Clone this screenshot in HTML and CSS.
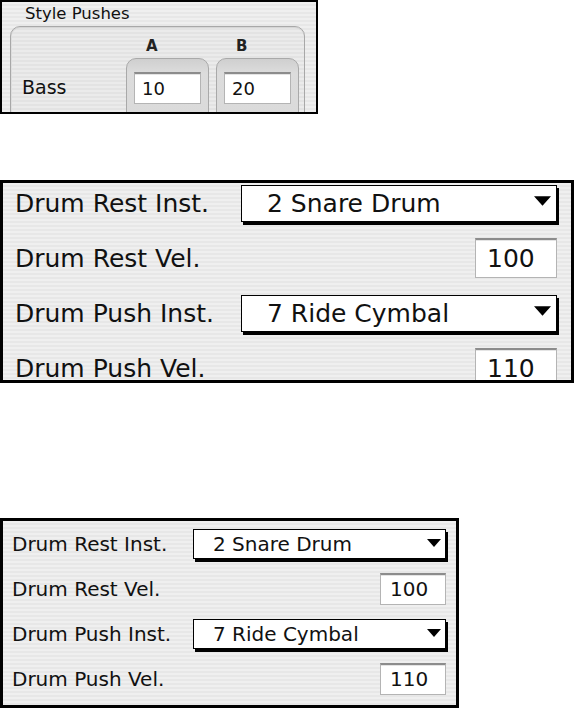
FILE: index.html
```html
<!DOCTYPE html>
<html>
<head>
<meta charset="utf-8">
<link rel="stylesheet" href="styles.css">
</head>
<body>
  <section class="panel pushes">
    <div class="title">Style Pushes</div>
    <div class="group">
      <div class="cell"></div>
      <div class="letter">A</div>
      <div class="letter">B</div>
      <div class="bass">Bass</div>
      <div class="col"><div class="field small">10</div></div>
      <div class="col"><div class="field small">20</div></div>
    </div>
  </section>

  <section class="panel drums big">
    <div class="label">Drum Rest Inst.</div>
    <div class="select"><span>2 Snare Drum</span><svg class="tri" viewBox="0 0 14 8"><polygon points="0,0 14,0 7,8"/></svg></div>
    <div class="label">Drum Rest Vel.</div>
    <div class="field num">100</div>
    <div class="label">Drum Push Inst.</div>
    <div class="select"><span>7 Ride Cymbal</span><svg class="tri" viewBox="0 0 14 8"><polygon points="0,0 14,0 7,8"/></svg></div>
    <div class="label">Drum Push Vel.</div>
    <div class="field num">110</div>
  </section>

  <section class="panel drums compact">
    <div class="label">Drum Rest Inst.</div>
    <div class="select"><span>2 Snare Drum</span><svg class="tri" viewBox="0 0 14 8"><polygon points="0,0 14,0 7,8"/></svg></div>
    <div class="label">Drum Rest Vel.</div>
    <div class="field num">100</div>
    <div class="label">Drum Push Inst.</div>
    <div class="select"><span>7 Ride Cymbal</span><svg class="tri" viewBox="0 0 14 8"><polygon points="0,0 14,0 7,8"/></svg></div>
    <div class="label">Drum Push Vel.</div>
    <div class="field num">110</div>
  </section>
</body>
</html>
```

FILE: styles.css
```css
html, body {
  margin: 0;
  padding: 0;
  background: #fff;
}
body {
  font-family: "DejaVu Sans", "Noto Sans", sans-serif;
  color: #111;
  width: 574px;
  height: 708px;
  overflow: hidden;
}
.panel {
  box-sizing: border-box;
  overflow: hidden;
  border: 3px solid #000;
  background: repeating-linear-gradient(#efefef 0 2px, #e7e7e7 2px 4px);
}

/* Panel 1 */
.pushes {
  width: 318px;
  height: 114px;
  border-width: 2px;
}
.pushes .title {
  font-size: 16.5px;
  line-height: 20px;
  padding: 2px 0 0 23px;
  height: 22px;
}
.group {
  margin-left: 8px;
  width: 295px;
  height: 120px;
  box-sizing: border-box;
  border: 1px solid #a8a8a8;
  border-radius: 10px;
  box-shadow: inset 0 1px 0 #d6d6d6, inset 1px 0 0 #dedede;
  background: rgba(0,0,0,0.015);
  display: grid;
  grid-template-columns: 97px 83px 83px;
  grid-template-rows: 18px auto;
  column-gap: 7px;
  row-gap: 3px;
  padding: 10px 0 0 11px;
}
.letter {
  font-weight: bold;
  font-size: 15px;
  line-height: 18px;
  padding-left: 20px;
  color: #222;
}
.bass {
  font-size: 19px;
  padding-top: 13px;
  line-height: 32px;
}
.col {
  height: 70px;
  box-sizing: border-box;
  border: 1px solid #a9a9a9;
  border-radius: 10px;
  background: linear-gradient(#cfcfcf, #dcdcdc 14px, #dadada);
  padding: 13px 0 0 7px;
}
.field {
  box-sizing: border-box;
  background: #fff;
  border: 1px solid #b4b4b4;
  border-top: 2px solid #8c8c8c;
  box-shadow: inset 0 1px 0 #e4e4e4;
  color: #111;
}
.field.small {
  width: 67px;
  height: 32px;
  font-size: 18px;
  line-height: 29px;
  padding-left: 7px;
}

/* Drum panels */
.drums {
  display: grid;
  align-items: center;
}
.drums .label {
  white-space: nowrap;
}
.select {
  box-sizing: border-box;
  background: #fff;
  border: 1px solid #000;
  box-shadow: 2px 3px 0 #000;
  display: flex;
  align-items: center;
  justify-content: space-between;
  white-space: nowrap;
}
.select .tri {
  fill: #000;
  display: block;
}
.field.num {
  justify-self: end;
}

.big {
  width: 574px;
  height: 203px;
  margin-top: 66px;
  padding: 0 0 0 12px;
  grid-template-columns: 226px 316px;
  grid-template-rows: repeat(4, 40px);
  row-gap: 15px;
  align-content: start;
  font-size: 25px;
}
.big .select {
  height: 37px;
  padding: 0 5px 0 25px;
}
.big .select .tri {
  width: 17px;
  height: 10px;
  margin-top: -4px;
}
.big .field.num {
  width: 82px;
  height: 40px;
  line-height: 37px;
  padding-left: 11px;
}

.compact {
  width: 459px;
  height: 190px;
  margin-top: 135px;
  padding: 7px 0 0 9px;
  grid-template-columns: 181px 253px;
  grid-template-rows: repeat(4, 32px);
  row-gap: 13px;
  align-content: start;
  font-size: 20px;
}
.compact .select {
  height: 30px;
  padding: 0 4px 0 19px;
}
.compact .select .tri {
  width: 14px;
  height: 8px;
  margin-top: -3px;
}
.compact .field.num {
  width: 66px;
  height: 32px;
  line-height: 29px;
  padding-left: 9px;
}
```
